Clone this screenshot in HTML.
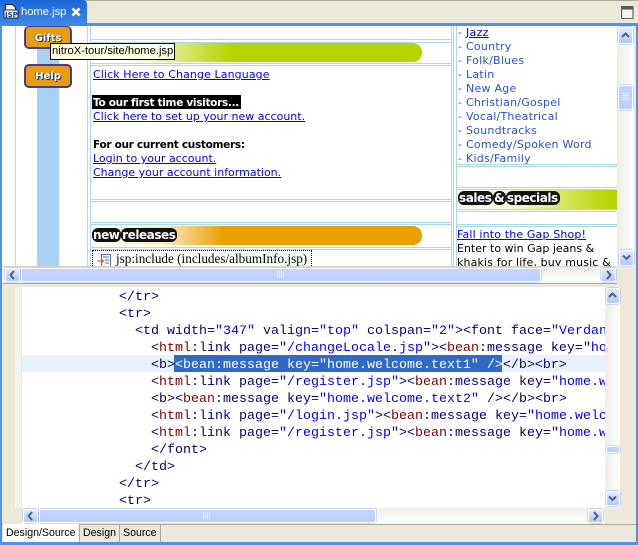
<!DOCTYPE html>
<html><head><meta charset="utf-8">
<style>
html,body{margin:0;padding:0;width:638px;height:545px;overflow:hidden;background:#ece9d8}
div,span.a{position:absolute}
.t{font:11px/14px "DejaVu Sans",sans-serif;white-space:pre;color:#000}
.l{color:#00f;text-decoration:underline}
.g{color:#2a4fd8;letter-spacing:.25px}
.b{font:bold 10.5px/14px "DejaVu Sans",sans-serif;letter-spacing:-.3px}
.h{background:#a9dae8}
.sb{background:linear-gradient(#c3d5fd,#bcd0fb);border:1px solid #fff;box-sizing:border-box;border-radius:2px;box-shadow:0 0 0 .5px #a8b8e0}
.btn{background:linear-gradient(#e1eafe,#b4c8f6);border:1px solid #fff;box-sizing:border-box;border-radius:2px;box-shadow:0 0 0 .5px #9db0e0}
.code{font:13.33px/17px "Liberation Mono",monospace;white-space:pre;color:#00007f}
.s{color:#00f}.m{color:#7f0000}
.hb{font:bold 12px/15px "DejaVu Sans",sans-serif;color:#fff;white-space:pre;letter-spacing:-.45px;word-spacing:-3px}
.hb span{background:#111;border-radius:6px;padding:0 2px 0 1px;margin-right:-1px}
.btnt{font:bold 10px/12px "DejaVu Sans",sans-serif;color:#fff;text-shadow:1px 1px 0 #334,-1px 0 0 #667;text-align:center}
</style></head><body>

<!-- tab bar -->
<div style="left:0;top:0;width:638px;height:1px;background:#aca899"></div>
<div style="left:0;top:23px;width:638px;height:3px;background:#4b93ef"></div>
<div style="left:0;top:0;width:87px;height:26px;background:linear-gradient(#1c66d8,#3f8be8);border-radius:0 4px 0 0"></div>
<svg style="position:absolute;left:3px;top:3px" width="16" height="17" viewBox="0 0 16 17"><path d="M2.5 1.5h7l3 3v3h-10z" fill="#fff" stroke="#123"/><rect x="1" y="7" width="14" height="8" fill="#fff" stroke="#224"/></svg>
<div style="left:5px;top:11px;font:bold 7px/8px 'DejaVu Sans',sans-serif;color:#1a3a90">JSP</div>
<div class="t" style="left:21px;top:5px;font:11.2px/14px 'Liberation Sans',sans-serif;color:#fff">home.jsp</div>
<svg style="position:absolute;left:71px;top:7px" width="11" height="11"><path d="M1.5 1.5l7 7M8.5 1.5l-7 7" stroke="#fff" stroke-width="2.6"/></svg>
<svg style="position:absolute;left:621px;top:6px" width="13" height="13"><rect x=".5" y=".5" width="9.5" height="10" transform="scale(1.2)" fill="#f5f4ec" stroke="#555" stroke-width=".9"/><rect x="1" y="1" width="11" height="2.5" fill="#555"/></svg>

<!-- frame -->
<div style="left:0;top:26px;width:2px;height:519px;background:#4b93ef"></div>
<div style="left:636px;top:26px;width:2px;height:519px;background:#4b93ef"></div>
<div style="left:0;top:542px;width:638px;height:3px;background:#4b93ef"></div>

<!-- design pane -->
<div style="left:2px;top:26px;width:615px;height:241px;background:#fff;overflow:hidden">
  <div class="h" style="left:13px;top:0;width:1px;height:241px"></div>
  <div style="left:35px;top:0;width:22px;height:241px;background:#a7d2f3"></div>
  <div class="h" style="left:85px;top:0;width:1px;height:241px"></div>
  <div class="h" style="left:88px;top:0;width:1px;height:241px"></div>
  <div class="h" style="left:449px;top:0;width:1px;height:241px"></div>
  <div class="h" style="left:451px;top:0;width:1px;height:241px"></div>
  <div class="h" style="left:454px;top:0;width:1px;height:241px"></div>
  <div class="h" style="left:88px;top:13px;width:362px;height:1px"></div>
  <div class="h" style="left:88px;top:16px;width:362px;height:1px"></div>
  <div class="h" style="left:88px;top:37px;width:362px;height:1px"></div>
  <div class="h" style="left:88px;top:39px;width:362px;height:1px"></div>
  <div class="h" style="left:88px;top:173px;width:362px;height:1px"></div>
  <div class="h" style="left:88px;top:175px;width:362px;height:1px"></div>
  <div class="h" style="left:88px;top:196px;width:362px;height:1px"></div>
  <div class="h" style="left:88px;top:198px;width:362px;height:1px"></div>
  <div class="h" style="left:88px;top:221px;width:362px;height:1px"></div>
  <div class="h" style="left:88px;top:223px;width:362px;height:1px"></div>
  <div class="h" style="left:454px;top:138px;width:161px;height:1px"></div>
  <div class="h" style="left:454px;top:140px;width:161px;height:1px"></div>
  <div class="h" style="left:454px;top:161px;width:161px;height:1px"></div>
  <div class="h" style="left:454px;top:163px;width:161px;height:1px"></div>
  <div class="h" style="left:454px;top:183px;width:161px;height:1px"></div>
  <div class="h" style="left:454px;top:185px;width:161px;height:1px"></div>
  <div class="h" style="left:454px;top:198px;width:161px;height:1px"></div>
  <div class="h" style="left:454px;top:200px;width:161px;height:1px"></div>
  <!-- banners -->
  <div style="left:89px;top:17px;width:331px;height:19px;background:linear-gradient(90deg,#fff 0,#fff 10%,#b8d400 42%);border-radius:0 9px 9px 0"></div>
  <div style="left:89px;top:200px;width:331px;height:19px;background:linear-gradient(90deg,#fff 0,#fbe9c4 22%,#e9a000 40%);border-radius:0 9px 9px 0"></div>
  <div style="left:455px;top:164px;width:160px;height:19px;background:linear-gradient(90deg,#fff 0,#f4f8cf 35%,#b8d400 95%)"></div>
  <div class="hb" style="left:90px;top:202px"><span>new</span> <span>releases</span></div>
  <div class="hb" style="left:456px;top:165px"><span>sales</span> <span>&amp;</span> <span>specials</span></div>
  <!-- buttons -->
  <div style="left:22px;top:0;width:48px;height:23px;background:#e89c10;border:2px solid #4a3a90;border-top-width:1px;box-sizing:border-box;border-radius:5px"></div>
  <div class="btnt" style="left:22px;top:7px;width:48px">Gifts</div>
  <div style="left:22px;top:38px;width:48px;height:24px;background:#e89c10;border:2px solid #4a3a90;box-sizing:border-box;border-radius:5px"></div>
  <div class="btnt" style="left:22px;top:45px;width:48px">Help</div>
  <!-- center text -->
  <div class="t l" style="left:91px;top:42px;letter-spacing:.1px">Click Here to Change Language</div>
  <div style="left:90px;top:69px;width:149px;height:14px;background:#000"></div>
  <div class="t b" style="left:91px;top:70px;color:#fff">To our first time visitors...</div>
  <div class="t l" style="left:91px;top:84px">Click here to set up your new account.</div>
  <div class="t b" style="left:91px;top:112px">For our current customers:</div>
  <div class="t l" style="left:91px;top:126px">Login to your account.</div>
  <div class="t l" style="left:91px;top:140px">Change your account information.</div>
  <!-- include -->
  <div style="left:90px;top:224px;width:220px;height:24px;border:1px dotted #00007f;box-sizing:border-box"></div>
  <svg style="position:absolute;left:94px;top:227px" width="16" height="16"><rect x="5.5" y="1.5" width="9" height="12" fill="#fff" stroke="#5870b0"/><path d="M7 4h6M9 7h4M9 10h4" stroke="#5870b0"/><path d="M1 8h6M5 5.5L7.5 8 5 10.5" stroke="#c08020" stroke-width="1.3" fill="none"/></svg>
  <div class="t" style="left:114px;top:226px;font:13.2px/14px 'Liberation Serif',serif">jsp:include (includes/albumInfo.jsp)</div>
  <!-- right column -->
  <div class="t g" style="left:456px;top:0">-</div><div class="t l" style="left:464px;top:0;letter-spacing:.3px">Jazz</div>
  <div class="t g" style="left:456px;top:14px">-</div><div class="t g" style="left:464px;top:14px">Country</div>
  <div class="t g" style="left:456px;top:28px">-</div><div class="t g" style="left:464px;top:28px">Folk/Blues</div>
  <div class="t g" style="left:456px;top:42px">-</div><div class="t g" style="left:464px;top:42px">Latin</div>
  <div class="t g" style="left:456px;top:56px">-</div><div class="t g" style="left:464px;top:56px">New Age</div>
  <div class="t g" style="left:456px;top:70px">-</div><div class="t g" style="left:464px;top:70px">Christian/Gospel</div>
  <div class="t g" style="left:456px;top:84px">-</div><div class="t g" style="left:464px;top:84px">Vocal/Theatrical</div>
  <div class="t g" style="left:456px;top:98px">-</div><div class="t g" style="left:464px;top:98px">Soundtracks</div>
  <div class="t g" style="left:456px;top:112px">-</div><div class="t g" style="left:464px;top:112px">Comedy/Spoken Word</div>
  <div class="t g" style="left:456px;top:126px">-</div><div class="t g" style="left:464px;top:126px">Kids/Family</div>
  <div class="t l" style="left:455px;top:202px;letter-spacing:.15px">Fall into the Gap Shop!</div>
  <div class="t" style="left:455px;top:216px">Enter to win Gap jeans &amp;</div>
  <div class="t" style="left:455px;top:230px;letter-spacing:.15px">khakis for life, buy music &amp;</div>
</div>

<!-- tooltip -->
<div style="left:50px;top:43px;width:125px;height:17px;background:#ffffe1;border:1px solid #000;box-sizing:border-box"></div>
<div class="t" style="left:52px;top:44px;font:11.2px/14px 'Liberation Sans',sans-serif">nitroX-tour/site/home.jsp</div>

<!-- top v scrollbar -->
<div style="left:617px;top:26px;width:17px;height:241px;background:linear-gradient(90deg,#eeede5,#fdfdfa)"></div>
<div class="btn" style="left:618px;top:27px;width:15px;height:17px"></div>
<svg style="position:absolute;left:621px;top:32px" width="9" height="7"><path d="M1 5l3.5-3.5L8 5" fill="none" stroke="#4d6185" stroke-width="2"/></svg>
<div class="sb" style="left:618px;top:85px;width:15px;height:25px"></div>
<svg style="position:absolute;left:622px;top:93px" width="8" height="9"><path d="M0 .5h7M0 2.5h7M0 4.5h7M0 6.5h7" stroke="#eef3ff"/></svg>
<div class="btn" style="left:619px;top:250px;width:15px;height:16px"></div>
<svg style="position:absolute;left:622px;top:254px" width="9" height="7"><path d="M1 1.5L4.5 5 8 1.5" fill="none" stroke="#4d6185" stroke-width="2"/></svg>

<!-- top h scrollbar -->
<div style="left:2px;top:267px;width:615px;height:16px;background:linear-gradient(#f0efe8,#fefefc)"></div>
<div style="left:2px;top:266px;width:615px;height:1px;background:#d6d3c8"></div>
<div class="btn" style="left:5px;top:268px;width:15px;height:14px"></div>
<svg style="position:absolute;left:9px;top:270px" width="7" height="10"><path d="M5 1L1.5 5 5 9" fill="none" stroke="#4d6185" stroke-width="2"/></svg>
<div class="sb" style="left:21px;top:268px;width:520px;height:14px"></div>
<svg style="position:absolute;left:277px;top:271px" width="9" height="8"><path d="M.5 0v7M2.5 0v7M4.5 0v7M6.5 0v7" stroke="#eef3ff"/></svg>
<div class="btn" style="left:601px;top:268px;width:15px;height:14px"></div>
<svg style="position:absolute;left:605px;top:270px" width="7" height="10"><path d="M2 1l3.5 4L2 9" fill="none" stroke="#4d6185" stroke-width="2"/></svg>
<div style="left:2px;top:283px;width:615px;height:1px;background:#a0a8c0"></div>

<!-- source pane -->
<div style="left:15px;top:287px;width:6px;height:221px;background:#f5f4ea"></div>
<div style="left:22px;top:287px;width:583px;height:221px;background:#fff;overflow:hidden">
  <div style="left:0;top:68px;width:583px;height:17px;background:#e8f2fe"></div>
  <div style="left:152px;top:68px;width:328px;height:17px;background:#316ac5"></div>
  <div class="code" style="left:97px;top:2px">&lt;/tr&gt;</div>
  <div class="code" style="left:97px;top:19px">&lt;tr&gt;</div>
  <div class="code" style="left:113px;top:36px">&lt;td width=<span class="s">"347"</span> valign=<span class="s">"top"</span> colspan=<span class="s">"2"</span>&gt;&lt;font face=<span class="s">"Verdana"</span></div>
  <div class="code" style="left:129px;top:53px">&lt;<span class="m">html</span>:link page=<span class="s">"/changeLocale.jsp"</span>&gt;&lt;<span class="m">bean</span>:message key=<span class="s">"home.welcome"</span></div>
  <div class="code" style="left:129px;top:70px">&lt;b&gt;<span style="color:#fff">&lt;bean:message key="home.welcome.text1" /&gt;</span>&lt;/b&gt;&lt;br&gt;</div>
  <div class="code" style="left:129px;top:87px">&lt;<span class="m">html</span>:link page=<span class="s">"/register.jsp"</span>&gt;&lt;<span class="m">bean</span>:message key=<span class="s">"home.welcome"</span></div>
  <div class="code" style="left:129px;top:104px">&lt;b&gt;&lt;<span class="m">bean</span>:message key=<span class="s">"home.welcome.text2"</span> /&gt;&lt;/b&gt;&lt;br&gt;</div>
  <div class="code" style="left:129px;top:121px">&lt;<span class="m">html</span>:link page=<span class="s">"/login.jsp"</span>&gt;&lt;<span class="m">bean</span>:message key=<span class="s">"home.welcome"</span></div>
  <div class="code" style="left:129px;top:138px">&lt;<span class="m">html</span>:link page=<span class="s">"/register.jsp"</span>&gt;&lt;<span class="m">bean</span>:message key=<span class="s">"home.welcome"</span></div>
  <div class="code" style="left:129px;top:155px">&lt;/font&gt;</div>
  <div class="code" style="left:113px;top:172px">&lt;/td&gt;</div>
  <div class="code" style="left:97px;top:189px">&lt;/tr&gt;</div>
  <div class="code" style="left:97px;top:206px">&lt;tr&gt;</div>
</div>

<!-- source v scrollbar -->
<div style="left:605px;top:287px;width:15px;height:221px;background:linear-gradient(90deg,#efeee6,#fdfdfa)"></div>
<div class="btn" style="left:606px;top:288px;width:14px;height:16px"></div>
<svg style="position:absolute;left:608px;top:292px" width="9" height="7"><path d="M1 5l3.5-3.5L8 5" fill="none" stroke="#4d6185" stroke-width="2"/></svg>
<div class="sb" style="left:606px;top:446px;width:14px;height:7px"></div>
<div class="btn" style="left:606px;top:491px;width:14px;height:15px"></div>
<svg style="position:absolute;left:608px;top:495px" width="9" height="7"><path d="M1 1.5L4.5 5 8 1.5" fill="none" stroke="#4d6185" stroke-width="2"/></svg>

<!-- source h scrollbar -->
<div style="left:22px;top:508px;width:583px;height:16px;background:linear-gradient(#f0efe8,#fefefc)"></div>
<div class="btn" style="left:23px;top:509px;width:15px;height:14px"></div>
<svg style="position:absolute;left:27px;top:511px" width="7" height="10"><path d="M5 1L1.5 5 5 9" fill="none" stroke="#4d6185" stroke-width="2"/></svg>
<div class="sb" style="left:39px;top:509px;width:337px;height:14px"></div>
<svg style="position:absolute;left:203px;top:512px" width="9" height="8"><path d="M.5 0v7M2.5 0v7M4.5 0v7M6.5 0v7" stroke="#eef3ff"/></svg>
<div class="btn" style="left:588px;top:509px;width:15px;height:14px"></div>
<svg style="position:absolute;left:592px;top:511px" width="7" height="10"><path d="M2 1l3.5 4L2 9" fill="none" stroke="#4d6185" stroke-width="2"/></svg>
<div style="left:2px;top:524px;width:634px;height:1px;background:#aca899"></div>

<!-- bottom tabs -->
<div style="left:3px;top:524px;width:76px;height:18px;background:#fff"></div>
<div style="left:79px;top:525px;width:1px;height:17px;background:#aca899"></div>
<div style="left:119px;top:525px;width:1px;height:17px;background:#aca899"></div>
<div style="left:160px;top:525px;width:1px;height:17px;background:#aca899"></div>
<div class="t" style="left:6px;top:526px;font:10.6px/14px 'Liberation Sans',sans-serif">Design/Source</div>
<div class="t" style="left:83px;top:526px;font:10.6px/14px 'Liberation Sans',sans-serif">Design</div>
<div class="t" style="left:123px;top:526px;font:10.6px/14px 'Liberation Sans',sans-serif">Source</div>
</body></html>
